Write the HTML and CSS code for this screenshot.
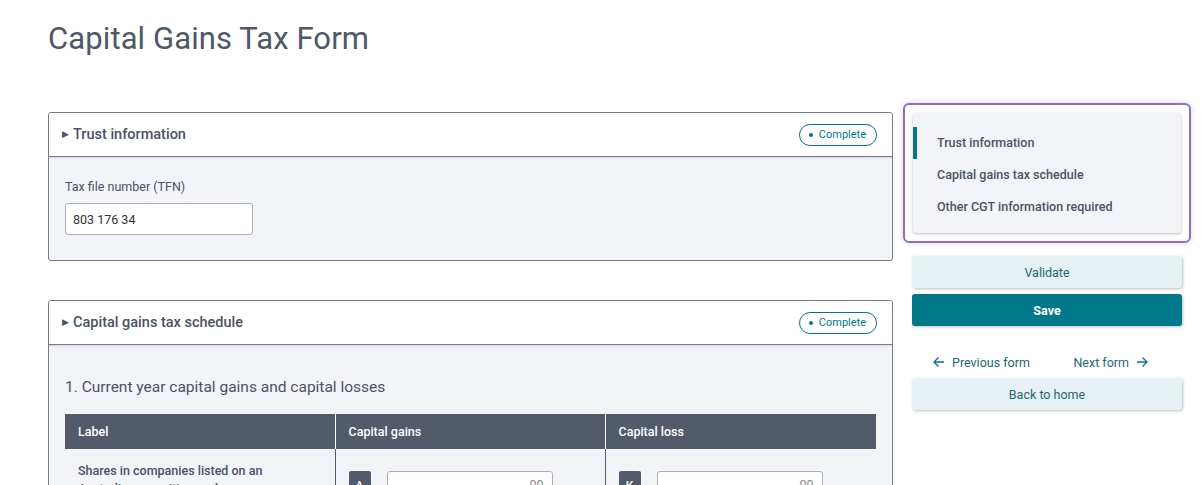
FILE: index.html
```html
<!DOCTYPE html>
<html lang="en">
<head>
    <meta charset="UTF-8">
    <title>Capital Gains Tax Form</title>
    <link rel="stylesheet" href="styles.css">
</head>
<body>
    <div class="page">
        <h1 class="page-title">Capital Gains Tax Form</h1>
        <div class="layout">
            <div class="main">
                <div class="panel">
                    <div class="panel-header">
                        <span class="panel-title"><span class="caret">&#9654;</span>Trust information</span>
                        <span class="badge"><span class="dot"></span>Complete</span>
                    </div>
                    <div class="panel-body">
                        <label class="field-label">Tax file number (TFN)</label>
                        <input class="text-input" type="text" value="803 176 34">
                    </div>
                </div>

                <div class="panel">
                    <div class="panel-header">
                        <span class="panel-title"><span class="caret">&#9654;</span>Capital gains tax schedule</span>
                        <span class="badge"><span class="dot"></span>Complete</span>
                    </div>
                    <div class="panel-body schedule">
                        <h2 class="section-title">1. Current year capital gains and capital losses</h2>
                        <table class="cgt-table">
                            <colgroup>
                                <col style="width: 270px">
                                <col style="width: 270px">
                                <col style="width: 271px">
                            </colgroup>
                            <thead>
                                <tr>
                                    <th>Label</th>
                                    <th>Capital gains</th>
                                    <th>Capital loss</th>
                                </tr>
                            </thead>
                            <tbody>
                                <tr>
                                    <td class="row-label">Shares in companies listed on an Australian securities exchange</td>
                                    <td><div class="amount"><span class="code">A</span><span class="amount-input">.00</span></div></td>
                                    <td><div class="amount"><span class="code">K</span><span class="amount-input">.00</span></div></td>
                                </tr>
                            </tbody>
                        </table>
                    </div>
                </div>
            </div>

            <div class="side">
                <div class="nav-focus">
                    <div class="nav-card">
                        <a class="nav-item active">Trust information</a>
                        <a class="nav-item">Capital gains tax schedule</a>
                        <a class="nav-item">Other CGT information required</a>
                    </div>
                </div>
                <button class="btn btn-light">Validate</button>
                <button class="btn btn-primary">Save</button>
                <div class="form-nav">
                    <a class="form-link"><svg width="14" height="14" viewBox="0 0 14 14"><path d="M12 7H2M6.5 2.5L2 7l4.5 4.5" fill="none" stroke="#00788a" stroke-width="1.3"/></svg>Previous form</a>
                    <a class="form-link">Next form<svg width="14" height="14" viewBox="0 0 14 14"><path d="M2 7h10M7.5 2.5L12 7l-4.5 4.5" fill="none" stroke="#00788a" stroke-width="1.3"/></svg></a>
                </div>
                <button class="btn btn-light">Back to home</button>
            </div>
        </div>
    </div>
</body>
</html>
```

FILE: styles.css
```css
body {
    margin: 0;
    font-family: 'Roboto', 'Liberation Sans', sans-serif;
    background: #fff;
    color: #4b5263;
}
.page {
    padding: 0 22px 0 48px;
}
.page-title {
    margin: 0;
    padding-top: 20px;
    height: 112px;
    box-sizing: border-box;
    font-size: 31px;
    font-weight: 400;
    color: #4f5769;
    letter-spacing: 0.1px;
}
.layout {
    display: flex;
    gap: 19px;
    align-items: flex-start;
}
.main {
    width: 845px;
    display: flex;
    flex-direction: column;
    gap: 39px;
}

/* panels */
.panel {
    border: 1px solid #747b8a;
    border-radius: 3px;
    background: #f3f4f8;
    overflow: hidden;
}
.panel-header {
    display: flex;
    justify-content: space-between;
    align-items: center;
    height: 43px;
    padding: 0 15px 0 13px;
    background: #fff;
    border-bottom: 1px solid #747b8a;
    box-shadow: 0 1px 2px rgba(0, 0, 0, 0.12);
}
.panel-title {
    font-size: 14.5px;
    font-weight: 500;
    color: #4b5263;
}
.caret {
    font-size: 9px;
    margin-right: 4px;
    vertical-align: 2px;
}
.badge {
    display: flex;
    align-items: center;
    height: 20px;
    padding: 0 10px 0 9px;
    border: 1px solid #00788a;
    border-radius: 11px;
    font-size: 11px;
    color: #00788a;
}
.dot {
    width: 4px;
    height: 4px;
    border-radius: 50%;
    background: #00788a;
    margin-right: 6px;
}
.panel-body {
    padding: 22px 16px 25px;
}
.field-label {
    display: block;
    font-size: 12.5px;
    color: #4b5263;
    margin-bottom: 9px;
}
.text-input {
    width: 188px;
    height: 32px;
    box-sizing: border-box;
    border: 1px solid #a9aeb8;
    border-radius: 3px;
    padding: 0 7px;
    font-family: inherit;
    font-size: 12.5px;
    color: #333;
}

/* schedule table */
.schedule {
    padding-top: 33px;
}
.section-title {
    margin: 0 0 18px;
    font-size: 15.5px;
    font-weight: 400;
    color: #4b5263;
}
.cgt-table {
    width: 811px;
    table-layout: fixed;
    border-collapse: collapse;
}
.cgt-table th {
    background: #525a6c;
    color: #fff;
    font-size: 12.5px;
    font-weight: 500;
    text-align: left;
    height: 35px;
    padding: 0 13px;
    border-right: 1px solid #fff;
}
.cgt-table th:last-child {
    border-right: none;
}
.cgt-table td {
    vertical-align: top;
    padding: 13px 13px 20px;
    border-right: 1px solid #525a6c;
    font-size: 12.5px;
    font-weight: 500;
    line-height: 18px;
}
.cgt-table td:last-child {
    border-right: none;
}
.row-label {
    padding-right: 60px !important;
}
.amount {
    display: flex;
    gap: 16px;
    margin-top: 9px;
}
.code {
    width: 22px;
    height: 30px;
    background: #525a6c;
    color: #fff;
    font-size: 12px;
    text-align: center;
    line-height: 30px;
    border-radius: 2px;
}
.amount-input {
    width: 166px;
    height: 30px;
    box-sizing: border-box;
    background: #fff;
    border: 1px solid #a9aeb8;
    border-radius: 3px;
    text-align: right;
    padding-right: 8px;
    color: #888;
    font-weight: 400;
    line-height: 26px;
}

/* side column */
.side {
    width: 270px;
    margin-top: -9px;
    display: flex;
    flex-direction: column;
    gap: 6px;
}
.nav-focus {
    margin: 0 -9px 7px;
    padding: 8px;
    border: 2px solid #8e6bdc;
    border-radius: 6px;
    box-shadow: 0 0 6px rgba(0, 0, 0, 0.15);
}
.nav-card {
    background: #f3f4f8;
    border-radius: 3px;
    box-shadow: 0 1px 3px rgba(0, 0, 0, 0.25);
    padding: 14px 0 10px;
}
.nav-item {
    display: block;
    height: 32px;
    line-height: 32px;
    font-size: 12.5px;
    font-weight: 500;
    color: #4b5263;
    padding-left: 20px;
    border-left: 4px solid transparent;
}
.nav-item.active {
    border-left-color: #00788a;
}
.btn {
    display: block;
    width: 100%;
    height: 32px;
    border: none;
    border-radius: 3px;
    font-family: inherit;
    font-size: 12.5px;
    cursor: pointer;
    box-shadow: 1px 1px 3px rgba(0, 0, 0, 0.25);
}
.btn-light {
    background: #e6f1f3;
    color: #1c6878;
}
.btn-primary {
    background: #00788a;
    color: #fff;
    font-weight: 700;
}
.form-nav {
    display: flex;
    justify-content: space-between;
    padding: 20px 33px 0 20px;
    height: 20px;
}
.form-link {
    display: flex;
    align-items: center;
    gap: 6px;
    font-size: 12.5px;
    color: #1c6878;
}
```
